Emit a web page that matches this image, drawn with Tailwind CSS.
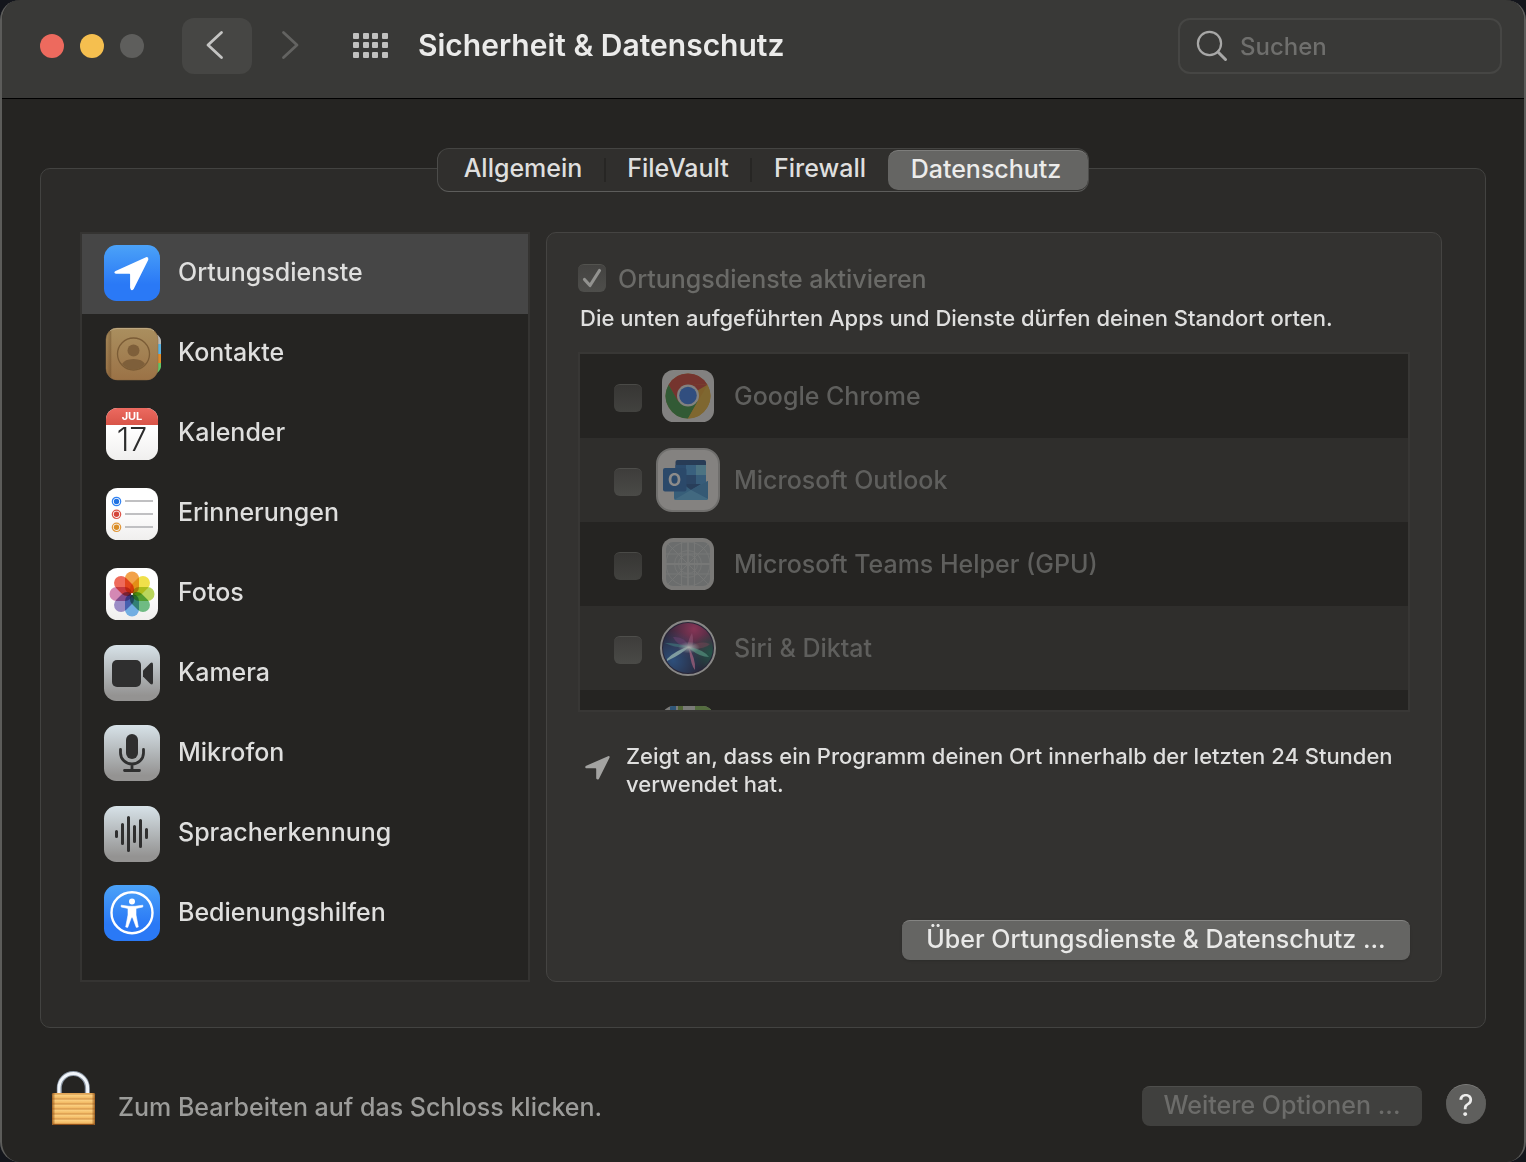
<!DOCTYPE html>
<html lang="de">
<head>
<meta charset="utf-8">
<meta name="viewport" content="width=device-width, initial-scale=1">
<title>Sicherheit &amp; Datenschutz</title>
<script src="https://cdn.jsdelivr.net/npm/@tailwindcss/browser@4"></script>
</head>
<body class="bg-[#14161c] font-[Inter,'Liberation_Sans',sans-serif] text-[25px] leading-8 font-medium text-[#dfdfde]">
<div class="flex min-h-screen flex-col overflow-hidden rounded-[20px] border-x-2 border-[#5c5c5a] bg-[#252422]">

  <!-- Toolbar -->
  <header class="flex h-[99px] items-start border-b border-black bg-[#393937] pr-[22px] pl-[38px] pt-[18px]">
    <div class="flex h-14 items-center gap-4">
      <button aria-label="Schließen" class="size-6 rounded-full bg-[#ed6a5e]"></button>
      <button aria-label="Minimieren" class="size-6 rounded-full bg-[#f5bf4f]"></button>
      <button aria-label="Zoomen" class="size-6 rounded-full bg-[#5e5e5c]" disabled></button>
    </div>
    <button aria-label="Zurück" class="ml-[38px] flex h-14 w-[70px] items-center justify-center rounded-xl bg-[#464644]">
      <svg class="size-14" viewBox="0 0 56 56" fill="none" stroke="#c4c4c3" stroke-width="2.8" stroke-linecap="round" stroke-linejoin="round"><path d="M32.500 14.500 19 27 32.500 39.500"/></svg>
    </button>
    <button aria-label="Vorwärts" class="ml-[10px] flex h-14 w-14 items-center justify-center" disabled>
      <svg class="size-14" viewBox="0 0 56 56" fill="none" stroke="#636361" stroke-width="2.800" stroke-linecap="round" stroke-linejoin="round"><path d="M21.500 14.500 35 27 21.500 39.500"/></svg>
    </button>
    <button aria-label="Alle einblenden" class="ml-[34px] flex h-14 items-center">
      <svg class="h-7 w-9" viewBox="0 0 36 28" fill="#c1c1c0">
        <rect x="1" y="1" width="6" height="6" rx="1"/><rect x="11" y="1" width="6" height="6" rx="1"/><rect x="20" y="1" width="6" height="6" rx="1"/><rect x="30" y="1" width="6" height="6" rx="1"/>
        <rect x="1" y="10" width="6" height="6" rx="1"/><rect x="11" y="10" width="6" height="6" rx="1"/><rect x="20" y="10" width="6" height="6" rx="1"/><rect x="30" y="10" width="6" height="6" rx="1"/>
        <rect x="1" y="20" width="6" height="6" rx="1"/><rect x="11" y="20" width="6" height="6" rx="1"/><rect x="20" y="20" width="6" height="6" rx="1"/><rect x="30" y="20" width="6" height="6" rx="1"/>
      </svg>
    </button>
    <h1 class="ml-[30px] text-[30px] leading-[54px] font-semibold whitespace-nowrap text-[#ebebea]">Sicherheit &amp; Datenschutz</h1>
    <label class="ml-auto flex h-14 w-[324px] items-center gap-3 rounded-xl border-2 border-[#464644] px-4">
      <svg class="size-8 shrink-0" viewBox="0 0 32 32" fill="none" stroke="#a8a8a7" stroke-linecap="round"><circle cx="13.500" cy="13.500" r="11.600" stroke-width="2.200"/><path d="M22 22 29.500 29.500" stroke-width="3"/></svg>
      <input type="search" placeholder="Suchen" aria-label="Suchen" class="w-full min-w-0 bg-transparent pt-[2px] text-[24px] outline-none placeholder:text-[#6f6f6d]">
    </label>
  </header>

  <main class="flex flex-col px-[38px] pt-[49px]">
    <!-- Tabs -->
    <div role="tablist" class="z-10 flex h-11 items-center self-center rounded-xl border border-t-[#444442] border-x-[#4c4c4a] border-b-[#5d5d5b] bg-[#302f2d] whitespace-nowrap">
      <button role="tab" class="h-10 w-[166px] pl-1 pb-1">Allgemein</button>
      <span class="h-6 w-[2px] bg-[#272624]"></span>
      <button role="tab" class="h-10 w-[144px] pb-1">FileVault</button>
      <span class="h-6 w-[2px] bg-[#272624]"></span>
      <button role="tab" class="h-10 w-[136px] pb-1">Firewall</button>
      <button role="tab" aria-selected="true" class="h-10 w-[200px] rounded-[10px] border-t border-[#7d7d7b] bg-[#656563] pr-1 pb-1 text-[#ececeb]">Datenschutz</button>
    </div>

    <section class="-mt-6 grid grid-cols-[450px_minmax(0,1fr)] gap-4 rounded-[10px] border border-[#434341] bg-[#2c2b29] pt-[63px] pr-[43px] pb-[45px] pl-[39px]">
      <!-- Categories -->
      <ul class="border-2 border-[#353432] bg-[#252422] pb-[26px]">
        <li><button class="flex h-20 w-full items-center bg-[#464646] pr-4 pl-[20px] text-left">
          <svg class="mr-4 size-15 shrink-0" viewBox="0 0 60 60"><defs><linearGradient id="blue" x1="0" y1="0" x2="0" y2="1"><stop offset="0" stop-color="#4ba2f8"/><stop offset=".7" stop-color="#2a79f6"/></linearGradient></defs><rect x="2" y="1" width="56" height="56" rx="12.500" fill="url(#blue)"/><path d="M44 13.200 13.600 27q-2.700 1.700.4 2.800h13.500q.6 0 .6.700v13.300q1.200 4.400 3.600 1.100L46.300 15.700q.5-3.200-2.300-2.500Z" fill="#fff"/></svg>
          <span class="pb-1">Ortungsdienste</span></button></li>
        <li><button class="flex h-20 w-full items-center pr-4 pl-[20px] text-left">
          <svg class="mr-4 size-15 shrink-0" viewBox="0 0 60 60"><defs><linearGradient id="tan" x1="0" y1="0" x2="0" y2="1"><stop offset="0" stop-color="#aa8f5f"/><stop offset="1" stop-color="#9b7246"/></linearGradient><linearGradient id="fold" x1="0" x2="1"><stop offset="0" stop-color="#5a3c1c" stop-opacity=".1"/><stop offset=".7" stop-color="#5a3c1c" stop-opacity=".35"/><stop offset="1" stop-color="#5a3c1c" stop-opacity="0"/></linearGradient></defs><path d="M54 10q5 3 5 7v4h-5Z" fill="#b9b8b5"/><path d="M53 20h6v10h-6Z" fill="#59b1e0"/><path d="M53 30h6v9h-6Z" fill="#e08a28"/><path d="M53 39h6v4q-1 5-6 7Z" fill="#63c566"/><rect x="4" y="4" width="52" height="52" rx="11.500" fill="url(#tan)" stroke="#8b6842" stroke-width=".5"/><path d="M8 7Q10 4.600 15 4.600H45Q50 4.600 52 7" fill="none" stroke="#c0ad86" stroke-width="1"/><path d="M5 14Q5 8 10 6V54Q5 52 5 46Z" fill="url(#fold)"/><circle cx="31.500" cy="30" r="16" fill="none" stroke="#7b5c36" stroke-width="1.300"/><circle cx="31.500" cy="26.500" r="6" fill="#7e5f3a"/><path d="M20 40q2.500-4.800 11.500-5 9 .2 11.500 5-5 5.500-11.500 5.500T20 40Z" fill="#7e5f3a"/></svg>
          <span class="pb-1">Kontakte</span></button></li>
        <li><button class="flex h-20 w-full items-center pr-4 pl-[20px] text-left">
          <svg class="mr-4 size-15 shrink-0" viewBox="0 0 60 60"><defs><linearGradient id="paper" x1="0" y1="0" x2="0" y2="1"><stop offset=".4" stop-color="#fff"/><stop offset="1" stop-color="#f0efee"/></linearGradient><linearGradient id="red" x1="0" y1="0" x2="0" y2="1"><stop offset="0" stop-color="#ec6a60"/><stop offset="1" stop-color="#d85448"/></linearGradient></defs><rect x="4" y="4" width="52" height="52" rx="11.500" fill="url(#paper)"/><path d="M4 21V15.500A11.500 11.500 0 0 1 15.500 4H44.500A11.500 11.500 0 0 1 56 15.500V21Z" fill="url(#red)"/><text x="30" y="16" text-anchor="middle" font-size="11" font-weight="700" fill="#fff">JUL</text><text x="30" y="47" text-anchor="middle" font-size="32" font-weight="300" fill="#2c2c2c">17</text></svg>
          <span class="pb-1">Kalender</span></button></li>
        <li><button class="flex h-20 w-full items-center pr-4 pl-[20px] text-left">
          <svg class="mr-4 size-15 shrink-0" viewBox="0 0 60 60"><rect x="4" y="4" width="52" height="52" rx="11.500" fill="url(#paper)"/><g stroke="#c0c0c2" stroke-width="1.800"><path d="M23 17H51M23 30H51M23 43H51"/></g><g fill="none" stroke-width="1.200"><circle cx="14.500" cy="17.500" r="4.200" stroke="#3183f3"/><circle cx="14.500" cy="30.300" r="4.200" stroke="#dd5448"/><circle cx="14.500" cy="43.300" r="4.200" stroke="#e2983a"/></g><circle cx="14.500" cy="17.500" r="2.700" fill="#2372e0"/><circle cx="14.500" cy="30.300" r="2.700" fill="#d3453a"/><circle cx="14.500" cy="43.300" r="2.700" fill="#d98d26"/></svg>
          <span class="pb-1">Erinnerungen</span></button></li>
        <li><button class="flex h-20 w-full items-center pr-4 pl-[20px] text-left">
          <svg class="mr-4 size-15 shrink-0" viewBox="0 0 60 60"><rect x="4" y="4" width="52" height="52" rx="11.500" fill="url(#paper)"/><g class="isolate"><rect class="mix-blend-multiply" x="23" y="7.500" width="14" height="22.500" rx="7" fill="#f2a24a"/><rect class="mix-blend-multiply" x="23" y="7.500" width="14" height="22.500" rx="7" fill="#f0e04a" transform="rotate(45 30 30)"/><rect class="mix-blend-multiply" x="23" y="7.500" width="14" height="22.500" rx="7" fill="#b9d65c" transform="rotate(90 30 30)"/><rect class="mix-blend-multiply" x="23" y="7.500" width="14" height="22.500" rx="7" fill="#6fbb83" transform="rotate(135 30 30)"/><rect class="mix-blend-multiply" x="23" y="7.500" width="14" height="22.500" rx="7" fill="#72aee2" transform="rotate(180 30 30)"/><rect class="mix-blend-multiply" x="23" y="7.500" width="14" height="22.500" rx="7" fill="#9b8dc6" transform="rotate(225 30 30)"/><rect class="mix-blend-multiply" x="23" y="7.500" width="14" height="22.500" rx="7" fill="#d488b4" transform="rotate(270 30 30)"/><rect class="mix-blend-multiply" x="23" y="7.500" width="14" height="22.500" rx="7" fill="#ee6a5a" transform="rotate(315 30 30)"/></g><circle cx="30" cy="30" r="1.100" fill="#fff"/></svg>
          <span class="pb-1">Fotos</span></button></li>
        <li><button class="flex h-20 w-full items-center pr-4 pl-[20px] text-left">
          <svg class="mr-4 size-15 shrink-0" viewBox="0 0 60 60"><defs><linearGradient id="silver" x1="0" y1="0" x2="0" y2="1"><stop offset="0" stop-color="#d7e2e8"/><stop offset=".9" stop-color="#949392"/></linearGradient></defs><rect x="2" y="1" width="56" height="56" rx="12.500" fill="url(#silver)"/><rect x="10" y="16" width="29" height="27" rx="5" fill="#2f2f2f"/><path d="M41 26.500 48.500 19Q51 17.600 51 20.500V38.500Q51 41.400 48.500 40L41 32.500Z" fill="#2f2f2f"/></svg>
          <span class="pb-1">Kamera</span></button></li>
        <li><button class="flex h-20 w-full items-center pr-4 pl-[20px] text-left">
          <svg class="mr-4 size-15 shrink-0" viewBox="0 0 60 60"><rect x="2" y="1" width="56" height="56" rx="12.500" fill="url(#silver)"/><rect x="24" y="10" width="12" height="25" rx="6" fill="#2f2f2f"/><path d="M18.500 25.500V29a11.500 11 0 0 0 23 0V25.500M30 40V46M22.500 46.500H37.500" fill="none" stroke="#2f2f2f" stroke-width="2.800" stroke-linecap="round"/></svg>
          <span class="pb-1">Mikrofon</span></button></li>
        <li><button class="flex h-20 w-full items-center pr-4 pl-[20px] text-left">
          <svg class="mr-4 size-15 shrink-0" viewBox="0 0 60 60"><rect x="2" y="2" width="56" height="56" rx="12.500" fill="url(#silver)"/><path d="M14.500 27.500V32.500M20.500 20.500V39.500M26.500 13.500V46.500M32.500 22.500V37.500M38.500 16.500V42.500M44.500 25.500V33.500" stroke="#2f2f2f" stroke-width="3" stroke-linecap="round"/></svg>
          <span class="pb-1">Spracherkennung</span></button></li>
        <li><button class="flex h-20 w-full items-center pr-4 pl-[20px] text-left">
          <svg class="mr-4 size-15 shrink-0" viewBox="0 0 60 60"><rect x="2" y="1" width="56" height="56" rx="12.500" fill="url(#blue)"/><circle cx="30" cy="28.700" r="20.500" fill="none" stroke="#fff" stroke-width="2.400"/><circle cx="30" cy="17.500" r="3" fill="#fff"/><path d="M19.200 21.200 27 22.300H33L40.800 21.200V23L34 24.400V31L36.300 43 34.300 43.400 30.600 33.500H29.400L25.700 43.400 23.700 43 26 31V24.400L19.200 23Z" fill="#fff" stroke="#fff" stroke-width=".6" stroke-linejoin="round"/></svg>
          <span class="pb-1">Bedienungshilfen</span></button></li>
      </ul>

      <!-- Location services -->
      <div class="flex flex-col rounded-[10px] border border-[#454442] bg-[#333230] pt-[31px] pr-[31px] pb-[21px] pl-[31px]">
        <div class="flex h-7 items-center gap-3">
          <span class="grid size-7 shrink-0 *:col-start-1 *:row-start-1">
            <input id="loc" type="checkbox" checked disabled class="size-7 appearance-none rounded-md border-t border-[#53534f] bg-linear-to-b from-[#444341] to-[#4e4e4b]">
            <svg class="pointer-events-none size-7" viewBox="0 0 28 28" fill="none" stroke="#92928f" stroke-width="3.200" stroke-linecap="round" stroke-linejoin="round"><path d="M6.500 15.500 12 21.500 21.500 6.500"/></svg>
          </span>
          <label for="loc" class="pt-[2px] text-[#6a6a67]">Ortungsdienste aktivieren</label>
        </div>
        <p class="pt-3 pl-[2px] text-[22px] leading-7">Die unten aufgeführten Apps und Dienste dürfen deinen Standort orten.</p>

        <ul class="mt-5 h-[360px] overflow-hidden border-2 border-[#383735] bg-[#252422] text-[#5f5f5d]">
          <li class="flex h-21 items-center pl-[34px]">
            <input id="a1" type="checkbox" disabled class="mt-1 size-7 appearance-none rounded-md border-t border-[#4a4a47] bg-linear-to-b from-[#373634] to-[#42423f]">
            <svg class="mx-[14px] size-16 shrink-0 opacity-50" viewBox="0 0 64 64"><rect x="6" y="6" width="52" height="52" rx="11.500" fill="#dededd"/><circle cx="32" cy="32" r="22.400" fill="#d99f36"/><path d="M32 32 51.400 20.800A22.400 22.400 0 0 0 12.600 20.800L22 38Z" fill="#c5443a"/><path d="M12.600 20.800A22.400 22.400 0 0 0 32 54.400L41.700 37.600 22.300 37.600Z" fill="#3f9149"/><path d="M32 21H51.400L41.700 37.600 32 54.400A22.400 22.400 0 0 0 51.400 20.800Z" fill="#d9a93f"/><circle cx="32" cy="31.500" r="11" fill="#dededd"/><circle cx="32" cy="31.500" r="8.800" fill="#3d79dc"/></svg>
            <label for="a1">Google Chrome</label>
          </li>
          <li class="flex h-21 items-center bg-[#2f2e2c] pl-[34px]">
            <input id="a2" type="checkbox" disabled class="mt-1 size-7 appearance-none rounded-md border-t border-[#4e4e4b] bg-linear-to-b from-[#3e3d3b] to-[#4a4a47]">
            <svg class="mx-[14px] size-16 shrink-0 opacity-50" viewBox="0 0 64 64"><rect x="1" y="1" width="62" height="62" rx="15" fill="#d8d6d4" stroke="#b0afad" stroke-width="2"/><path d="M19.500 14Q19.500 12 21.500 12H48Q50 12 50 14V20H19.500Z" fill="#234a80"/><path d="M19.500 17H30V27H19.500Z" fill="#2b6ab0"/><path d="M30 17H40V27H30Z" fill="#4393d0"/><path d="M40 17H50V27H40Z" fill="#6ab8d8"/><path d="M19.500 27H40V37H19.500Z" fill="#2a5e9e"/><path d="M40 27H50V38H40Z" fill="#3f8ac6"/><path d="M18 36H45L52 33V50Q52 52 50 52H20Q18 52 18 50Z" fill="#3f8ec6"/><path d="M27 36H45L35 42Z" fill="#234f88"/><path d="M35 42 52 51V33Z" fill="#3c84bb"/><path d="M18 52 35 42 52 51Q51 52 50 52Z" fill="#56a5d4"/><rect x="7" y="20" width="23.500" height="23.500" rx="2" fill="#2864a8"/><text x="18.500" y="38" text-anchor="middle" font-size="17" font-weight="700" fill="#e8e8e8">O</text></svg>
            <label for="a2">Microsoft Outlook</label>
          </li>
          <li class="flex h-21 items-center pl-[34px]">
            <input id="a3" type="checkbox" disabled class="mt-1 size-7 appearance-none rounded-md border-t border-[#4a4a47] bg-linear-to-b from-[#373634] to-[#42423f]">
            <svg class="mx-[14px] size-16 shrink-0 opacity-50" viewBox="0 0 64 64"><rect x="6" y="6" width="52" height="52" rx="11.500" fill="#cfcecc"/><rect x="10" y="10" width="44" height="44" rx="7" fill="#b0b6b8"/><g fill="none" stroke="#c8cbcb" stroke-width=".9"><path d="M25.500 10V54M38.500 10V54M10 22H54M10 42H54M12 12 52 52M52 12 12 52"/><circle cx="32" cy="32" r="22"/><circle cx="32" cy="32" r="13.500"/><circle cx="32" cy="32" r="9.500"/></g><path d="M32 10V54M10 32H54" stroke="#c8cbcb" stroke-width="1.800"/></svg>
            <label for="a3">Microsoft Teams Helper (GPU)</label>
          </li>
          <li class="flex h-21 items-center bg-[#2f2e2c] pl-[34px]">
            <input id="a4" type="checkbox" disabled class="mt-1 size-7 appearance-none rounded-md border-t border-[#4e4e4b] bg-linear-to-b from-[#3e3d3b] to-[#4a4a47]">
            <svg class="mx-[14px] size-16 shrink-0 opacity-60" viewBox="0 0 64 64"><defs><radialGradient id="s1" cx=".62" cy=".12" r=".6"><stop offset="0" stop-color="#c23a72"/><stop offset="1" stop-color="#c23a72" stop-opacity="0"/></radialGradient><radialGradient id="s2" cx=".2" cy=".75" r=".6"><stop offset="0" stop-color="#2d66b0"/><stop offset="1" stop-color="#2d66b0" stop-opacity="0"/></radialGradient><radialGradient id="s3" cx=".95" cy=".6" r=".4"><stop offset="0" stop-color="#1f6b5a"/><stop offset="1" stop-color="#1f6b5a" stop-opacity="0"/></radialGradient><radialGradient id="s4"><stop offset="0" stop-color="#fff"/><stop offset="1" stop-color="#a9d8e0" stop-opacity="0"/></radialGradient></defs><circle cx="32" cy="32" r="27" fill="#25213f" stroke="#c4c3c2" stroke-width="2"/><circle cx="32" cy="32" r="25" fill="url(#s1)"/><circle cx="32" cy="32" r="25" fill="url(#s2)"/><circle cx="32" cy="32" r="25" fill="url(#s3)"/><path d="M17 21Q29 20 33 31 22 31 17 21Z" fill="#8a4f98" opacity=".6"/><path d="M31 31Q33 22 36 17 38 24 36 31Z" fill="#cf6ca0" opacity=".6"/><path d="M34 31Q44 24 54 28 50 33 34 33Z" fill="#a85570" opacity=".5"/><path d="M9 27Q22 27 34 31 22 33 9 27Z" fill="#4eaeb2" opacity=".6"/><path d="M34 31Q48 34 53 41 44 41 34 33Z" fill="#62c2a8" opacity=".8"/><path d="M32 31Q40 42 39 54 35 50 33 33Z" fill="#d27aa8" opacity=".85"/><path d="M11 43Q20 34 34 30 26 38 11 45Z" fill="#b5e6ee"/><ellipse cx="33" cy="31.500" rx="11" ry="6" fill="url(#s4)"/></svg>
            <label for="a4">Siri &amp; Diktat</label>
          </li>
          <li class="flex h-21 items-center pl-[76px]" aria-label="Karten">
            <svg class="size-16 shrink-0 opacity-50" viewBox="0 0 64 64"><defs><clipPath id="m"><rect x="6" y="6" width="52" height="52" rx="11.500"/></clipPath></defs><g clip-path="url(#m)"><path d="M6 6H58V58H6Z" fill="#cfcfcd"/><path d="M14 6H20V58H14Z" fill="#3a86cc"/><path d="M22 6H27V58H22Z" fill="#7fa84c"/><path d="M39 6H58V58H39Z" fill="#84b45c"/></g></svg>
          </li>
        </ul>

        <div class="mt-[30px] flex gap-4 pl-[6px] text-[22px] leading-7">
          <svg class="mt-3 size-[26px] shrink-0" viewBox="0 0 26 26" fill="#a3a3a1"><path d="M24 2.200 1.700 12Q.6 13.800 2 14.300H11.600Q12.200 14.300 12.200 15V24.500Q13.500 26.600 15 24.700L25.600 3.500Q26 1.700 24 2.200Z"/></svg>
          <p>Zeigt an, dass ein Programm deinen Ort innerhalb der letzten 24 Stunden verwendet hat.</p>
        </div>

        <button class="mt-auto h-10 w-[508px] self-end rounded-lg border-t border-[#848482] bg-[#656563] pb-1 whitespace-nowrap text-[#e9e9e8] shadow-sm">Über Ortungsdienste &amp; Datenschutz ...</button>
      </div>
    </section>
  </main>

  <footer class="flex items-start pt-[42px] pr-[38px] pl-12 pb-9">
    <button aria-label="Schloss" class="h-14 w-[46px] shrink-0">
      <svg class="h-14 w-[46px]" viewBox="0 0 46 56"><defs><linearGradient id="gold" x1="0" y1="0" x2="0" y2="5" gradientUnits="userSpaceOnUse" spreadMethod="repeat"><stop offset="0" stop-color="#fbd283"/><stop offset=".55" stop-color="#f3bb66"/><stop offset=".8" stop-color="#d3944a"/><stop offset="1" stop-color="#f7c878"/></linearGradient><linearGradient id="edge" x1="0" x2="1"><stop offset="0" stop-color="#8a4a10" stop-opacity=".8"/><stop offset=".08" stop-color="#8a4a10" stop-opacity="0"/><stop offset=".92" stop-color="#8a4a10" stop-opacity="0"/><stop offset="1" stop-color="#8a4a10" stop-opacity=".8"/></linearGradient></defs><path d="M9.300 24V18a14 14.500 0 0 1 28 0V24" fill="none" stroke="#8d98a6" stroke-width="5"/><path d="M9 24V18a14.300 14.600 0 0 1 28.600 0V24" fill="none" stroke="#f1f5fa" stroke-width="3"/><rect x="2" y="23" width="43" height="32" rx="1.500" fill="url(#gold)"/><rect x="2" y="23" width="43" height="32" rx="1.500" fill="url(#edge)"/><path d="M3 54.500H44" stroke="#8f4f18"/></svg>
    </button>
    <p class="ml-[22px] pt-[21px] text-[#9c9c9a]">Zum Bearbeiten auf das Schloss klicken.</p>
    <button disabled class="mt-4 ml-auto h-10 w-[280px] rounded-lg border-t border-[#4e4e4c] bg-[#40403e] pb-1 text-[#6c6c6a]">Weitere Optionen ...</button>
    <button aria-label="Hilfe" class="mt-[14px] ml-6 size-10 rounded-full border-t border-[#7d7d7b] bg-[#5f5f5d] text-[30px] font-normal text-[#ececeb]">?</button>
  </footer>
</div>
</body>
</html>
